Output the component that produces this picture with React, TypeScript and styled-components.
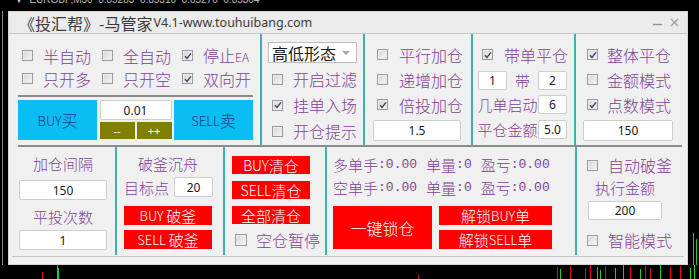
import React from 'react';
import styled, { createGlobalStyle } from 'styled-components';

const TEAL = '#3ab3a8';
const PURPLE = '#7f3f96';
const RED = '#ff0000';
const CJK = '"Noto Sans CJK SC", "Noto Sans", sans-serif';

const GlobalStyle = createGlobalStyle`
  html, body { margin: 0; padding: 0; background: #000; }
  body { width: 699px; height: 279px; overflow: hidden; font-family: ${CJK}; font-weight: 300; }
  * { box-sizing: border-box; }
`;

const Page = styled.div`
  display: flex;
  flex-direction: column;
  width: 699px;
  height: 279px;
  background: #000;
`;

const QuoteBar = styled.div`
  height: 11px;
  overflow: hidden;
  padding-left: 14px;
  color: #bdbdbd;
  font: 10px/12px "Liberation Sans", sans-serif;
  white-space: pre;
  span { display: block; margin-top: -6px; }
`;

const Middle = styled.div`
  display: flex;
  height: 254px;
`;

const LeftEdge = styled.div`
  width: 8px;
  background: linear-gradient(to right, #000 2px, #8a8a8a 2px, #8a8a8a 3px, #000 3px);
`;

const RightEdge = styled.div`
  flex: 1;
  display: flex;
  align-items: flex-end;
`;

const ChartStrip = styled.div`
  height: 14px;
  display: flex;
`;

const Window = styled.div`
  width: 680px;
  height: 254px;
  border: 1px solid #d6d6d6;
  background: #ebebeb;
  display: flex;
  flex-direction: column;
`;

const TitleBar = styled.div`
  height: 22px;
  flex: none;
  border-bottom: 1px solid #c6c6c6;
  display: flex;
  align-items: center;
  padding: 0 8px 0 10px;
  color: #3a3a3a;
`;

const TitleCn = styled.span`
  font-size: 16px;
  font-weight: 400;
  line-height: 20px;
`;

const TitleEn = styled.span`
  font: 12.5px/20px "Noto Sans", sans-serif;
  margin-left: 1px;
`;

const Controls = styled.div`
  margin-left: auto;
  display: flex;
  align-items: center;
  gap: 8px;
`;

const Body = styled.div`
  flex: 1;
  background: #f0f0f0;
  padding: 0 3px;
  display: flex;
  flex-direction: column;
`;

const TopRow = styled.div`
  height: 111px;
  display: grid;
  grid-template-columns: 248px 103px 108px 103px 1fr;
`;

const BottomRow = styled.div`
  height: 108px;
  display: grid;
  grid-template-columns: 103px 108px 102px 250px 1fr;
`;

const HRule = styled.div`
  height: 2px;
  margin: 0 2px 0 6px;
  background: #8c8c8c;
`;

const Footer = styled.div`
  flex: 1;
  margin-top: 1px;
  border-top: 1px solid #c4c4c4;
`;

const Section = styled.div<{ $divider?: boolean; $pt?: number; $pl?: number }>`
  display: flex;
  flex-direction: column;
  border-left: ${p => (p.$divider ? `2px solid ${TEAL}` : 'none')};
  padding-top: ${p => p.$pt ?? 8}px;
  padding-left: ${p => p.$pl ?? 0}px;
`;

const CheckGrid = styled.div`
  display: grid;
  grid-template-columns: repeat(3, 80px);
  grid-auto-rows: 23px;
  padding-left: 10px;
`;

const CheckRow = styled.div<{ $h?: number; $pl?: number; $gap?: number }>`
  display: flex;
  align-items: center;
  height: ${p => p.$h ?? 25}px;
  padding-left: ${p => p.$pl ?? 0}px;
  gap: ${p => p.$gap ?? 10}px;
`;

const Box = styled.span<{ $size?: number }>`
  width: ${p => p.$size ?? 11}px;
  height: ${p => p.$size ?? 11}px;
  flex: none;
  border: 1px solid #9a9a9a;
  background: linear-gradient(135deg, #d6d6d6, #f6f6f6);
  box-shadow: inset 0 0 0 1px #ececec;
  display: inline-flex;
  align-items: center;
  justify-content: center;
`;

const Label = styled.span<{ $size?: number }>`
  color: ${PURPLE};
  font-size: ${p => p.$size ?? 16}px;
  line-height: 20px;
  white-space: nowrap;
`;

const Small = styled.span`
  font-size: 12px;
`;

const Check = ({ label, checked, size, box, suffix }: { label: string; checked?: boolean; size?: number; box?: number; suffix?: string }) => (
  <>
    <Box $size={box}>
      {checked && (
        <svg width="8" height="8" viewBox="0 0 8 8">
          <path d="M1 4.2 L3 6.4 L7 1.4" stroke="#3c4766" strokeWidth="1.5" fill="none" />
        </svg>
      )}
    </Box>
    <Label $size={size}>
      {label}
      {suffix && <Small>{suffix}</Small>}
    </Label>
  </>
);

const GrayRule = styled.div`
  height: 2px;
  margin: 5px 7px 0 6px;
  background: #8a8a8a;
`;

const TradeRow = styled.div`
  display: flex;
  justify-content: space-between;
  margin: 3px 7px 0 6px;
  height: 40px;
`;

const BlueButton = styled.div`
  width: 79px;
  background: #0abdf2;
  color: #1d3a86;
  display: flex;
  align-items: center;
  justify-content: center;
  font-size: 16px;
`;

const Latin = styled.span<{ $size?: number }>`
  font-size: ${p => p.$size ?? 13}px;
`;

const LotBox = styled.div`
  width: 72px;
  display: flex;
  flex-direction: column;
  gap: 2px;
`;

const StepRow = styled.div`
  display: flex;
  gap: 2px;
  height: 17px;
`;

const OliveButton = styled.div`
  flex: 1;
  background: #7f7f00;
  color: #fff;
  font: 11px/17px "Noto Sans", sans-serif;
  text-align: center;
`;

const Field = styled.input<{ $w: number; $h?: number; $ml?: number; $mt?: number }>`
  width: ${p => p.$w}px;
  height: ${p => p.$h ?? 20}px;
  margin: ${p => p.$mt ?? 0}px 0 0 ${p => p.$ml ?? 0}px;
  padding: 0;
  border: 1px solid #cdcdcd;
  border-radius: 2px;
  background: #fff;
  color: #1a1a1a;
  font: 12px "Noto Sans", sans-serif;
  text-align: center;
  outline: none;
  flex: none;
`;

const Select = styled.div`
  width: 89px;
  height: 21px;
  margin-left: 6px;
  background: #fff;
  border: 1px solid #bdbdbd;
  display: flex;
  align-items: center;
  padding: 0 6px 0 3px;
  font-size: 16px;
  font-weight: 400;
  color: #1a1a1a;
`;

const Caret = styled.span`
  margin-left: auto;
  width: 0;
  height: 0;
  border-left: 4px solid transparent;
  border-right: 4px solid transparent;
  border-top: 4px solid #a8a8a8;
`;

const FieldRow = styled.div<{ $pl?: number; $mt?: number }>`
  display: flex;
  align-items: center;
  height: 19px;
  margin-top: ${p => p.$mt ?? 5}px;
  padding-left: ${p => p.$pl ?? 0}px;
`;

const MidText = styled.span<{ $w: number }>`
  width: ${p => p.$w}px;
  text-align: center;
  color: ${PURPLE};
  font-size: 15px;
  line-height: 19px;
`;

const CenterCol = styled.div<{ $w: number; $pl?: number }>`
  display: flex;
  flex-direction: column;
  align-items: center;
  width: ${p => p.$w}px;
  margin-left: ${p => p.$pl ?? 0}px;
`;

const Caption = styled.div<{ $h: number; $mt?: number }>`
  height: ${p => p.$h}px;
  line-height: ${p => p.$h}px;
  margin-top: ${p => p.$mt ?? 0}px;
  color: ${PURPLE};
  font-size: 15px;
`;

const RedButton = styled.div<{ $w: number; $h: number; $mt?: number; $size?: number }>`
  width: ${p => p.$w}px;
  height: ${p => p.$h}px;
  margin-top: ${p => p.$mt ?? 0}px;
  background: ${RED};
  color: #fff;
  display: flex;
  align-items: center;
  justify-content: center;
  font-size: ${p => p.$size ?? 15}px;
  white-space: pre;
  flex: none;
`;

const StatLine = styled.div`
  display: flex;
  align-items: center;
  height: 23px;
  color: ${PURPLE};
`;

const StatKey = styled.span`
  font-size: 15px;
`;

const StatVal = styled.span`
  font: 13px "Liberation Mono", monospace;
  margin-right: 9px;
`;

const Stat = ({ k, v }: { k: string; v: string }) => (
  <>
    <StatKey>{k}</StatKey>
    <StatVal>:{v}</StatVal>
  </>
);

const LockRow = styled.div`
  display: flex;
  gap: 7px;
  margin-top: 7px;
`;

const UnlockCol = styled.div`
  display: flex;
  flex-direction: column;
  gap: 5px;
`;

const candles: [number, number, string][] = [
  [42, 7, '#d11'], [57, 0, '#2c2'], [58, 3, '#2c2'], [418, 10, '#d11'],
  [557, 2, '#d11'], [560, 4, '#2c2'], [570, 1, '#d11'], [585, 3, '#d11'], [590, 0, '#d11'],
  [597, 2, '#2c2'], [600, 5, '#2c2'], [605, 1, '#d11'], [615, 3, '#2c2'], [623, 0, '#2c2'],
  [630, 2, '#d11'], [640, 4, '#2c2'], [645, 1, '#d11'], [650, 3, '#d11'], [660, 0, '#2c2'],
  [670, 2, '#d11'], [680, 1, '#d11'], [690, 3, '#2c2'], [694, 0, '#2c2'],
];

export default function App() {
  return (
    <>
      <GlobalStyle />
      <Page>
        <QuoteBar>
          <span>▼  EURGBP,M30  0.85283  0.85310  0.85270  0.85304</span>
        </QuoteBar>
        <Middle>
          <LeftEdge />
          <Window>
            <TitleBar>
              <TitleCn>《投汇帮》-马管家</TitleCn>
              <TitleEn>V4.1-www.touhuibang.com</TitleEn>
              <Controls>
                <svg width="9" height="9" viewBox="0 0 9 9">
                  <path d="M0 6.5 H9" stroke="#8c8c8c" strokeWidth="1.3" />
                </svg>
                <svg width="9" height="9" viewBox="0 0 9 9">
                  <path d="M1 1 L8 8 M8 1 L1 8" stroke="#a6a6a6" strokeWidth="1.6" />
                </svg>
              </Controls>
            </TitleBar>
            <Body>
              <TopRow>
                <Section $pt={10}>
                  <CheckGrid>
                    <CheckRow $h={23}><Check label="半自动" /></CheckRow>
                    <CheckRow $h={23}><Check label="全自动" /></CheckRow>
                    <CheckRow $h={23}><Check label="停止" suffix="EA" checked /></CheckRow>
                    <CheckRow $h={23}><Check label="只开多" /></CheckRow>
                    <CheckRow $h={23}><Check label="只开空" /></CheckRow>
                    <CheckRow $h={23}><Check label="双向开" checked /></CheckRow>
                  </CheckGrid>
                  <GrayRule />
                  <TradeRow>
                    <BlueButton><Latin>BUY</Latin>买</BlueButton>
                    <LotBox>
                      <Field $w={72} readOnly value="0.01" />
                      <StepRow>
                        <OliveButton>--</OliveButton>
                        <OliveButton>++</OliveButton>
                      </StepRow>
                    </LotBox>
                    <BlueButton><Latin>SELL</Latin>卖</BlueButton>
                  </TradeRow>
                </Section>

                <Section $divider>
                  <Select>
                    高低形态
                    <Caret />
                  </Select>
                  <CheckRow $h={26} $pl={10} $gap={10} style={{ marginTop: 3 }}><Check label="开启过滤" /></CheckRow>
                  <CheckRow $h={26} $pl={10} $gap={10}><Check label="挂单入场" checked /></CheckRow>
                  <CheckRow $h={26} $pl={10} $gap={10}><Check label="开仓提示" /></CheckRow>
                </Section>

                <Section $divider>
                  <CheckRow $pl={12} $gap={11}><Check label="平行加仓" /></CheckRow>
                  <CheckRow $pl={12} $gap={11}><Check label="递增加仓" /></CheckRow>
                  <CheckRow $pl={12} $gap={11}><Check label="倍投加仓" checked /></CheckRow>
                  <Field $w={88} $h={21} $ml={8} $mt={3} readOnly value="1.5" />
                </Section>

                <Section $divider>
                  <CheckRow $pl={9} $gap={11}><Check label="带单平仓" checked /></CheckRow>
                  <FieldRow $pl={5} $mt={4}>
                    <Field $w={29} $h={19} readOnly value="1" />
                    <MidText $w={31}>带</MidText>
                    <Field $w={29} $h={19} readOnly value="2" />
                  </FieldRow>
                  <FieldRow $pl={4}>
                    <MidText $w={61}>几单启动</MidText>
                    <Field $w={29} $h={19} readOnly value="6" />
                  </FieldRow>
                  <FieldRow $pl={4} $mt={6}>
                    <MidText $w={61}>平仓金额</MidText>
                    <Field $w={29} $h={19} readOnly value="5.0" />
                  </FieldRow>
                </Section>

                <Section $divider>
                  <CheckRow $pl={11} $gap={9}><Check label="整体平仓" checked /></CheckRow>
                  <CheckRow $pl={11} $gap={9}><Check label="金额模式" /></CheckRow>
                  <CheckRow $pl={11} $gap={9}><Check label="点数模式" checked /></CheckRow>
                  <Field $w={90} $h={21} $ml={7} $mt={3} readOnly value="150" />
                </Section>
              </TopRow>

              <HRule />

              <BottomRow>
                <Section $pt={5}>
                  <CenterCol $w={88} $pl={7}>
                    <Caption $h={24}>加仓间隔</Caption>
                    <Field $w={88} $mt={4} readOnly value="150" />
                    <Caption $h={24} $mt={5}>平投次数</Caption>
                    <Field $w={88} $mt={1} readOnly value="1" />
                  </CenterCol>
                </Section>

                <Section $divider $pt={5} $pl={7}>
                  <CenterCol $w={88}>
                    <Caption $h={24}>破釜沉舟</Caption>
                  </CenterCol>
                  <FieldRow $mt={1} style={{ height: 20 }}>
                    <MidText $w={50} style={{ textAlign: 'left' }}>目标点</MidText>
                    <Field $w={39} readOnly value="20" />
                  </FieldRow>
                  <RedButton $w={88} $h={19} $mt={9}><Latin>BUY </Latin>破釜</RedButton>
                  <RedButton $w={88} $h={19} $mt={5}><Latin>SELL </Latin>破釜</RedButton>
                </Section>

                <Section $divider $pt={9} $pl={7}>
                  <RedButton $w={78} $h={18}><Latin $size={14}>BUY</Latin>清仓</RedButton>
                  <RedButton $w={78} $h={18} $mt={7}><Latin $size={14}>SELL</Latin>清仓</RedButton>
                  <RedButton $w={78} $h={18} $mt={7}>全部清仓</RedButton>
                  <CheckRow $h={18} $pl={3} $gap={9} style={{ marginTop: 7 }}>
                    <Check label="空仓暂停" box={12} />
                  </CheckRow>
                </Section>

                <Section $divider $pt={6} $pl={6}>
                  <StatLine>
                    <Stat k="多单手" v="0.00" />
                    <Stat k="单量" v="0" />
                    <Stat k="盈亏" v="0.00" />
                  </StatLine>
                  <StatLine>
                    <Stat k="空单手" v="0.00" />
                    <Stat k="单量" v="0" />
                    <Stat k="盈亏" v="0.00" />
                  </StatLine>
                  <LockRow>
                    <RedButton $w={99} $h={43} $size={16}>一键锁仓</RedButton>
                    <UnlockCol>
                      <RedButton $w={113} $h={19}>解锁<Latin>BUY</Latin>单</RedButton>
                      <RedButton $w={113} $h={19}>解锁<Latin>SELL</Latin>单</RedButton>
                    </UnlockCol>
                  </LockRow>
                </Section>

                <Section $divider $pt={6}>
                  <CheckRow $h={24} $pl={10} $gap={10}><Check label="自动破釜" /></CheckRow>
                  <CenterCol $w={74} $pl={11}>
                    <Caption $h={22}>执行金额</Caption>
                    <Field $w={74} $h={19} $mt={2} readOnly value="200" />
                  </CenterCol>
                  <CheckRow $h={22} $pl={10} $gap={10} style={{ marginTop: 9 }}><Check label="智能模式" /></CheckRow>
                </Section>
              </BottomRow>
              <Footer />
            </Body>
          </Window>
          <RightEdge>
            <svg width="11" height="40" viewBox="0 0 11 40">
              <path d="M5.5 8 V40" stroke="#2c2" strokeWidth="1" />
              <path d="M8.5 14 V40" stroke="#2c2" strokeWidth="1" />
            </svg>
          </RightEdge>
        </Middle>
        <ChartStrip>
          <svg width="699" height="14" viewBox="0 0 699 14">
            {candles.map(([x, y, c], i) => (
              <path key={i} d={`M${x + 0.5} ${y} V14`} stroke={c} strokeWidth="1" />
            ))}
          </svg>
        </ChartStrip>
      </Page>
    </>
  );
}
